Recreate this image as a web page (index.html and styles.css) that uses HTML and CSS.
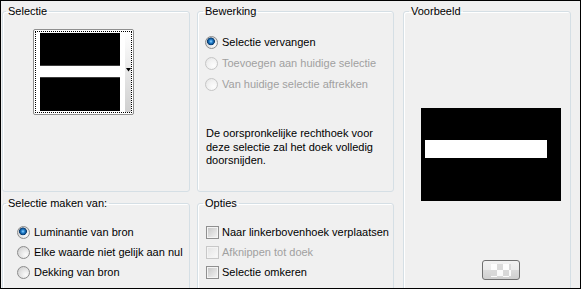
FILE: index.html
```html
<!DOCTYPE html>
<html>
<head>
  <title>Selectie</title>
  <link rel="stylesheet" href="styles.css">
</head>
<body>
  <div class="dialog">
    <fieldset class="group sel">
      <legend>Selectie</legend>
      <div class="swatch">
        <div class="swatch-focus">
          <div class="swatch-img"></div>
          <div class="swatch-drop">
            <svg width="5" height="4" viewBox="0 0 5 4"><polygon points="0,0 5,0 2.5,3.5" fill="#000"/></svg>
          </div>
        </div>
      </div>
    </fieldset>

    <fieldset class="group edit">
      <legend>Bewerking</legend>
      <div class="options">
        <label class="opt"><span class="radio on"></span>Selectie vervangen</label>
        <label class="opt off"><span class="radio"></span>Toevoegen aan huidige selectie</label>
        <label class="opt off"><span class="radio"></span>Van huidige selectie aftrekken</label>
      </div>
      <p class="note">De oorspronkelijke rechthoek voor<br>deze selectie zal het doek volledig<br>doorsnijden.</p>
    </fieldset>

    <fieldset class="group preview">
      <legend>Voorbeeld</legend>
      <div class="canvas"><div class="band"></div></div>
      <button class="bg-btn"><span class="checker"></span></button>
    </fieldset>

    <fieldset class="group source">
      <legend>Selectie maken van:</legend>
      <div class="options">
        <label class="opt"><span class="radio on"></span>Luminantie van bron</label>
        <label class="opt"><span class="radio"></span>Elke waarde niet gelijk aan nul</label>
        <label class="opt"><span class="radio"></span>Dekking van bron</label>
      </div>
    </fieldset>

    <fieldset class="group opts">
      <legend>Opties</legend>
      <div class="options">
        <label class="opt"><span class="check"></span>Naar linkerbovenhoek verplaatsen</label>
        <label class="opt off"><span class="check"></span>Afknippen tot doek</label>
        <label class="opt"><span class="check"></span>Selectie omkeren</label>
      </div>
    </fieldset>
  </div>
</body>
</html>
```

FILE: styles.css
```css
body {
  margin: 0;
  font-family: "Liberation Sans", Arial, sans-serif;
  font-size: 11px;
  color: #000;
}

.dialog {
  width: 581px;
  height: 289px;
  box-sizing: border-box;
  border: 1px solid #000;
  background-color: #f0f0f0;
  padding: 4px 0 0 1px;
  display: grid;
  grid-template-columns: 188px 197px 170px;
  grid-template-rows: 187px 120px;
  column-gap: 7px;
  row-gap: 5px;
  overflow: hidden;
}

.group {
  margin: 0;
  padding: 0;
  min-width: 0;
  border: 1px solid #d5dfe5;
  border-radius: 3px;
  box-shadow: inset 1px 1px 0 #fff;
}

.group legend {
  padding: 0 2px;
  margin-left: 5px;
  line-height: 13px;
}

.sel, .source {
  grid-column: 1;
}

.sel legend, .source legend {
  margin-left: 3px;
}

.edit, .opts {
  grid-column: 2;
}

.preview {
  grid-column: 3;
  grid-row: 1 / span 2;
  margin-left: 2px;
}

/* selectie swatch */
.swatch {
  width: 101px;
  height: 86px;
  box-sizing: border-box;
  margin: 11px 0 0 30px;
  padding: 1px;
  border: 1px solid #8f8f8f;
  border-radius: 2px;
  background-color: #fff;
}

.swatch-focus {
  height: 100%;
  box-sizing: border-box;
  border: 1px dotted #000;
  padding: 1px 0 1px 4px;
  display: flex;
}

.swatch-img {
  width: 80px;
  background: linear-gradient(to bottom, #000 0, #000 32px, #3c3c3c 32px, #3c3c3c 33px, #fff 33px, #fff 44px, #3c3c3c 44px, #3c3c3c 45px, #000 45px);
}

.swatch-drop {
  width: 6px;
  margin: -1px 0 -1px 5px;
  background: linear-gradient(to bottom, #fff, #cfcfcf);
  display: flex;
  align-items: flex-start;
  justify-content: center;
  padding-top: 36px;
  box-sizing: border-box;
}

.swatch-drop svg {
  display: block;
}

/* radio / checkbox rows */
.options {
  display: flex;
  flex-direction: column;
}

.edit .options {
  margin-top: 14px;
  padding-left: 7px;
}

.source .options {
  margin-top: 12px;
  padding-left: 14px;
}

.opts .options {
  margin-top: 12px;
  padding-left: 8px;
}

.opt {
  display: flex;
  align-items: center;
  height: 21px;
  line-height: 13px;
  white-space: nowrap;
}

.source .opt, .opts .opt {
  height: 20px;
}

.opt.off {
  color: #a0a0a0;
}

.radio {
  width: 13px;
  height: 13px;
  box-sizing: border-box;
  margin-right: 4px;
  border: 1px solid #8c8c8c;
  border-radius: 50%;
  background: radial-gradient(circle at 70% 70%, #fbfbfb 0, #e6e6e6 45%, #c9c9c9 100%);
  flex: none;
}

.radio.on {
  background:
    radial-gradient(circle at 45% 40%, #9bd6ff 0, #2a8ad6 1.5px, #0e4f8e 3px, #0a3a6a 3.6px, transparent 4.2px),
    radial-gradient(circle at 70% 70%, #fbfbfb 0, #e6e6e6 45%, #c9c9c9 100%);
}

.off .radio {
  border-color: #c5c5c5;
  background: radial-gradient(circle at 70% 70%, #fdfdfd 0, #f2f2f2 50%, #e2e2e2 100%);
}

.check {
  width: 13px;
  height: 13px;
  box-sizing: border-box;
  margin-right: 3px;
  border: 1px solid #8f8f8f;
  background: linear-gradient(135deg, #c4c4c4, #f5f5f5);
  box-shadow: inset 0 0 0 1px #f4f4f4;
  flex: none;
}

.off .check {
  border-color: #c8c8c8;
  background: linear-gradient(135deg, #e3e3e3, #fafafa);
}

.note {
  margin: 32px 0 0 8px;
  line-height: 13.5px;
}

/* voorbeeld */
.canvas {
  width: 140px;
  height: 93px;
  margin: 90px 0 0 17px;
  background-color: #000;
  padding: 32px 0 0 4px;
  box-sizing: border-box;
}

.band {
  width: 122px;
  height: 18px;
  background-color: #fff;
}

.bg-btn {
  display: flex;
  align-items: center;
  justify-content: center;
  width: 38px;
  height: 20px;
  margin: 59px 0 0 78px;
  padding: 0;
  border: 1px solid #707070;
  border-radius: 3px;
  background: linear-gradient(to bottom, #f2f2f2, #ebebeb 50%, #dcdcdc 50%, #cfcfcf);
}

.checker {
  width: 20px;
  height: 13px;
  background-color: #fff;
  background-image: conic-gradient(#d9d9d9 25%, transparent 0 50%, #d9d9d9 0 75%, transparent 0);
  background-size: 12px 12px;
  opacity: 0.9;
}
```
